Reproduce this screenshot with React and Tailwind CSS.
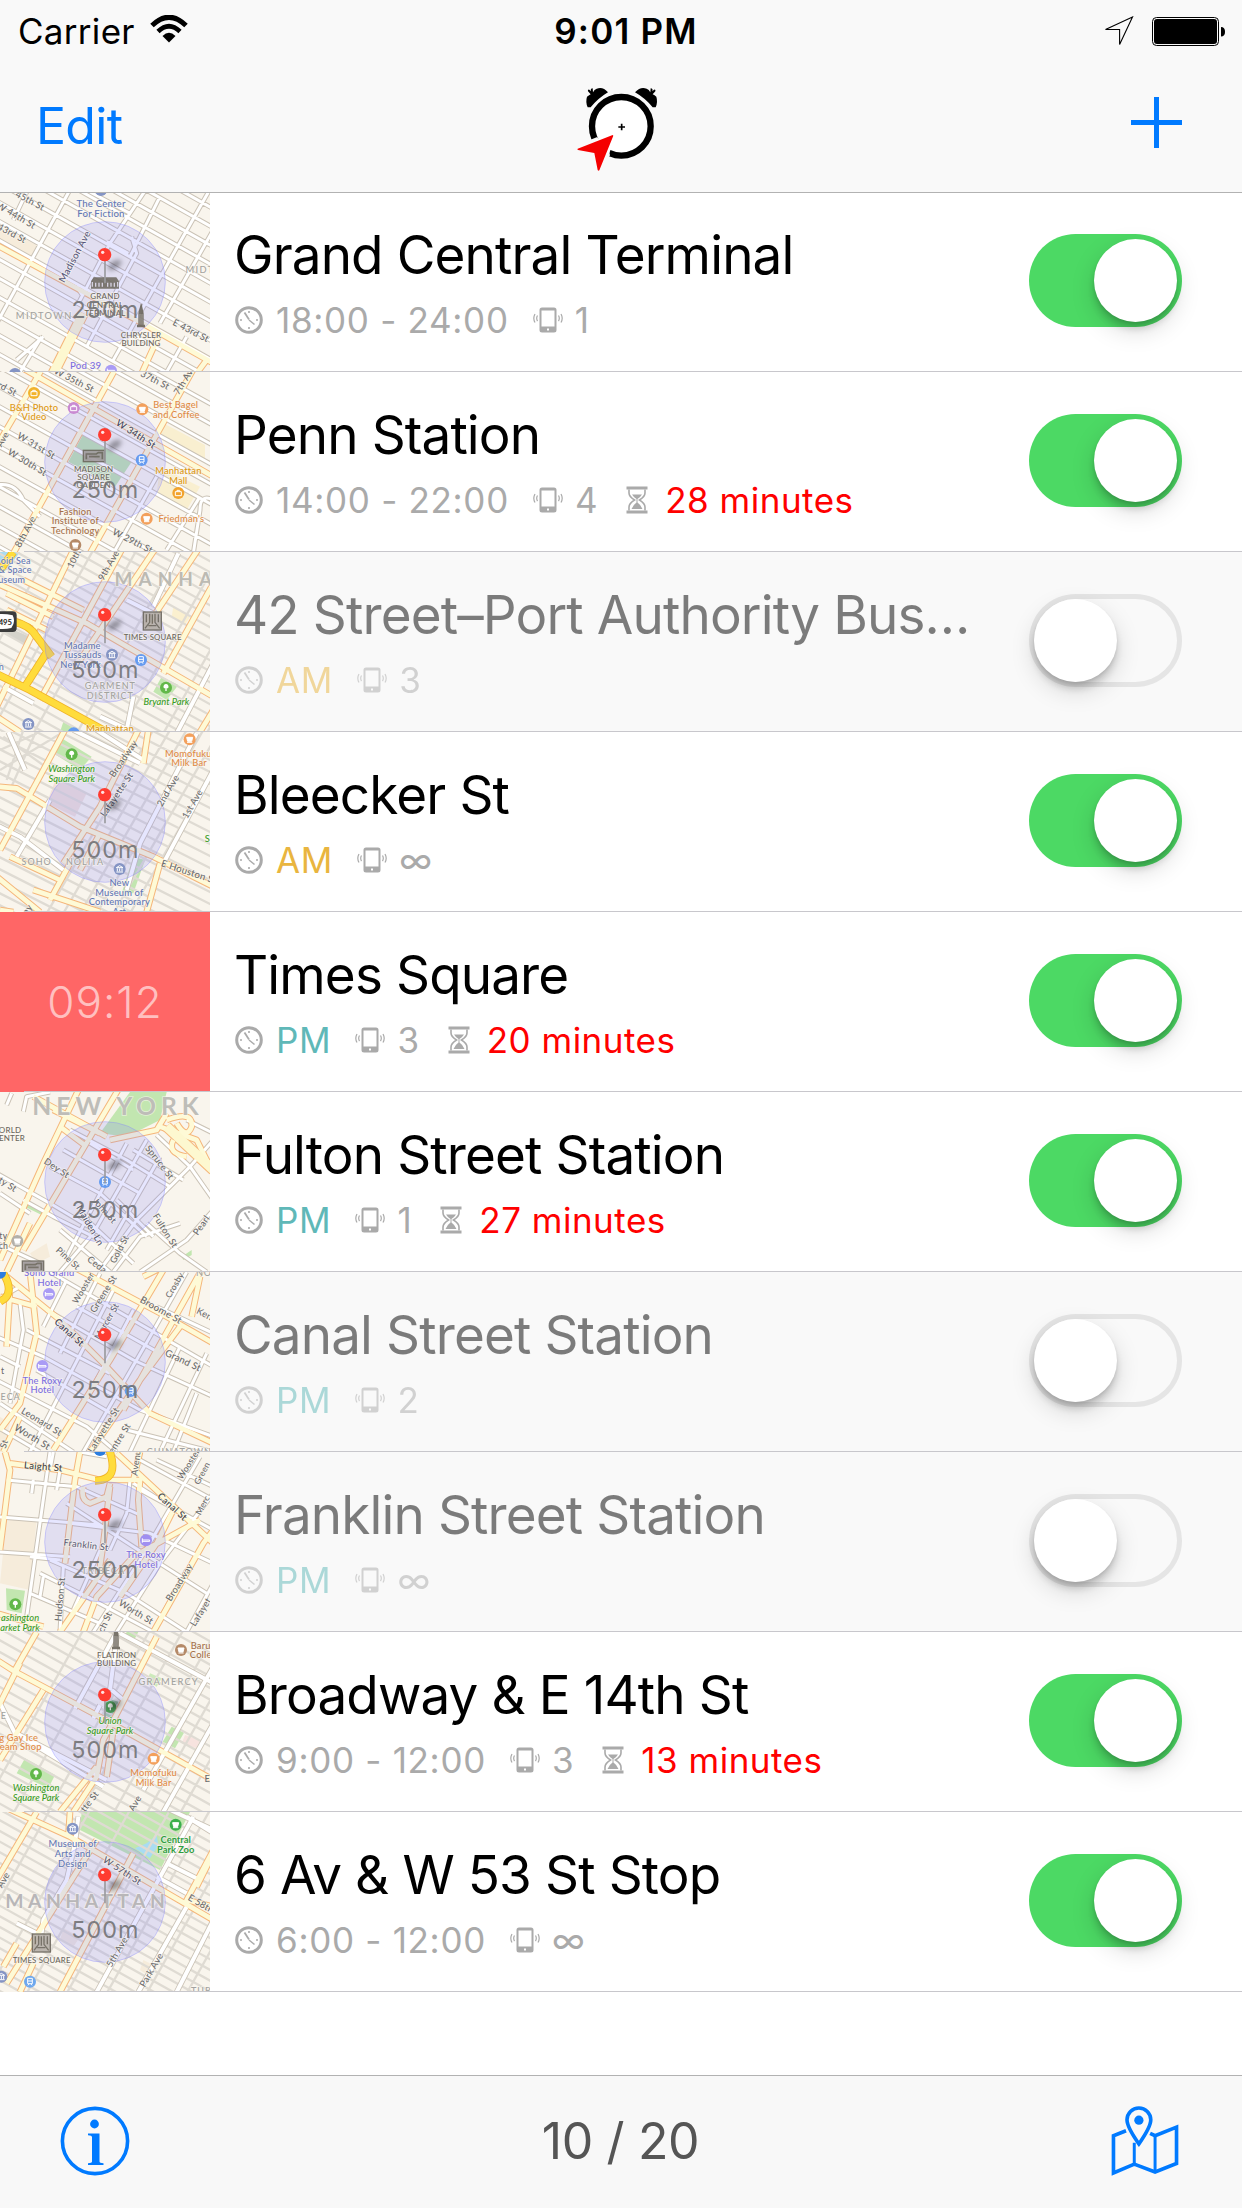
import { useState } from "react";

// n parallel segments, each moved by (dx, dy) from the one before
function fan(x1, y1, x2, y2, dx, dy, n) {
  let d = "";
  for (let i = 0; i < n; i++) {
    d += `M${x1 + dx * i} ${y1 + dy * i}L${x2 + dx * i} ${y2 + dy * i}`;
  }
  return d;
}

const BLUE = "#6277b5";
const VIOLET = "#7d6fe0";
const ORANGE = "#e08a45";
const GOLD = "#dd9812";
const GREEN = "#3a9d26";
const BROWN = "#a5714a";
const STREET = "#6b6b6b";
const AREA = "#a3a3a0";
const DARK = "#6b665c";

// labels: [x, y, text, color, size, angle, spacing, style]
// pois: [x, y, color, kind]
const maps = {
  grand: {
    blocks: [["M0 110L110 165L95 200L0 165Z", "#f6ecdb"]],
    white:
      fan(-20, -315, 650, 62, 0, 57, 16) +
      "M-10 400L215 -10M60 546L125 440M235 340L300 215L330 160L450 -20M390 200L480 20M385 190L320 155M395 140L410 190L260 470M340 510L640 -20M480 400L640 120M250 320L230 290M50 510L130 440M500 546L560 440M80 6L40 90M270 6L390 70",
    yellow: "M-10 165L240 300L410 390L640 520M425 550L480 430M590 550L620 510",
    wide: "M160 550L250 370",
    labels: [
      [90, 32, "45th St", STREET, 28, 28],
      [48, 76, "W 44th St", STREET, 28, 30],
      [36, 130, "43rd St", STREET, 28, 28],
      [224, 200, "Madison Ave", "#56567a", 29, -62],
      [303, 50, "The Center", BLUE, 29],
      [303, 80, "For Fiction", BLUE, 29],
      [133, 388, "MIDTOWN", AREA, 28, 0, 4],
      [600, 248, "MIDT", AREA, 28, 0, 4],
      [315, 328, "GRAND", DARK, 24],
      [315, 353, "CENTRAL", DARK, 24],
      [315, 378, "TERMINAL", DARK, 24],
      [423, 443, "CHRYSLER", DARK, 24],
      [423, 468, "BUILDING", DARK, 24],
      [573, 422, "E 43rd St", STREET, 28, 27],
      [257, 538, "Pod 39", VIOLET, 29],
    ],
    pois: [
      [303, 0, "#8494c4"],
      [333, 542, "#a99bf5", "bed"],
      [45, 552, "#8494c4"],
      [315, 280, DARK, "hall"],
      [423, 380, DARK, "tower"],
    ],
  },
  penn: {
    blocks: [
      ["M250 192L400 268L345 350L205 275Z", "#bfe3ae"],
      ["M490 160L615 225L615 270L470 200Z", "#f9efd0"],
      ["M480 290L600 350L560 420L470 370Z", "#f9efd0"],
    ],
    white:
      fan(-20, -260, 650, 112, 0, 60, 14) +
      "M-10 345Q45 335 70 390L120 440M500 540L600 380M580 550L600 420Q600 370 640 390M340 550L470 320",
    yellow:
      "M-10 -50L640 320M-5 220L130 -10M40 550L350 -10M270 550L590 -20",
    labels: [
      [222, 30, "W 35th St", STREET, 28, 27],
      [465, 30, "37th St", STREET, 28, 27],
      [550, 36, "7th Av", STREET, 28, -58],
      [22, 56, "rd St", STREET, 28, 27],
      [102, 122, "B&H Photo", GOLD, 28],
      [102, 151, "Video", GOLD, 28],
      [527, 115, "Best Bagel", ORANGE, 28],
      [529, 144, "and Coffee", ORANGE, 28],
      [408, 192, "W 34th St", "#44445c", 29, 33],
      [109, 227, "W 31st St", STREET, 28, 31],
      [82, 277, "W 30th St", STREET, 28, 31],
      [8, 208, "Ave", STREET, 27, -60],
      [281, 306, "MADISON", DARK, 24],
      [281, 331, "SQUARE", DARK, 24],
      [281, 355, "GARDEN", DARK, 24],
      [535, 313, "Manhattan", GOLD, 28],
      [535, 342, "Mall", GOLD, 28],
      [226, 434, "Fashion", BROWN, 28],
      [226, 463, "Institute of", BROWN, 28],
      [226, 493, "Technology", BROWN, 28],
      [544, 457, "Friedman's", ORANGE, 28],
      [76, 485, "8th Ave", STREET, 29, -62],
      [398, 513, "W 29th St", STREET, 28, 27],
    ],
    pois: [
      [102, 69, "#f2b32c", "bag"],
      [221, 114, "#c98ad2", "bag"],
      [427, 118, "#f3a05c", "cup"],
      [425, 270, "#659bf0", "train"],
      [535, 369, "#f2a32c", "bag"],
      [440, 446, "#f3a05c", "cup"],
      [226, 525, "#b58a68", "cup"],
      [283, 258, DARK, "arena"],
    ],
  },
  port: {
    blocks: [
      ["M485 380L535 405L500 450L460 425Z", "#c2e6b0"],
      ["M190 515L240 546L180 546Z", "#c2e6b0"],
      ["M0 6L60 6L20 60L0 70Z", "#a9dcf2"],
      ["M520 170L570 200L555 225L515 200Z", "#fbf0cf"],
      ["M20 230L100 265L90 290L10 250Z", "#d5d3cb"],
    ],
    grey: fan(-20, -330, 650, 45, 0, 33, 28) + fan(-160, 550, 150, 0, 130, 0, 8),
    white:
      "M380 540L400 440M530 550L640 340M535 10L460 170M380 150L480 200M10 410L100 460M300 500L400 546",
    yellow:
      "M-10 470L220 0M120 450L370 -10M240 330L470 -10M440 230L600 -10M490 370L640 100M-10 100L260 220L640 440M20 130L160 200M20 180L140 240M-10 500L60 546M600 546L640 480M70 90L250 180",
    highway:
      "M40 215Q90 225 110 260L155 320M145 300L75 410M-10 372L90 420L320 546M0 60L40 6",
    labels: [
      [47, 41, "oid Sea", BLUE, 27],
      [45, 70, "& Space", BLUE, 27],
      [35, 99, "useum", BLUE, 27],
      [222, 26, "10th", STREET, 27, -62],
      [326, 46, "9th Ave", STREET, 28, -60],
      [499, 107, "MANHA", "#bcbab3", 57, 0, 18, "bold"],
      [16, 225, "495", "#222", 23, 0, 0, "bold"],
      [458, 270, "TIMES SQUARE", DARK, 23.5],
      [247, 296, "Madame", BLUE, 28],
      [247, 325, "Tussauds", BLUE, 28],
      [242, 354, "New York", BLUE, 28],
      [331, 418, "GARMENT", AREA, 27, 0, 3],
      [331, 446, "DISTRICT", AREA, 27, 0, 3],
      [499, 464, "Bryant Park", GREEN, 28, 0, 0, "italic"],
      [330, 546, "Manhattan", GOLD, 29],
      [4, 360, "n", BLUE, 27],
    ],
    pois: [
      [10, 216, "#3b3b3b", "shield"],
      [457, 213, DARK, "square"],
      [336, 314, "#8494c4", "museum"],
      [423, 330, "#659bf0", "train"],
      [498, 413, "#62b84a", "tree"],
      [85, 522, "#8494c4", "museum"],
      [221, 550, "#659bf0"],
    ],
  },
  bleecker: {
    blocks: [
      ["M185 25L275 80L240 120L160 70Z", "#c2e6b0"],
      ["M400 380L435 390L400 490L365 490Z", "#c2e6b0"],
      ["M170 140L260 190L225 260L140 220Z", "#f1e0d8"],
    ],
    grey:
      fan(-20, -240, 650, 100, 0, 36, 26) +
      fan(140, 550, 460, 0, 50, 0, 6) +
      "M0 60L110 10M0 120L190 6M10 20L150 120M70 0L20 150M110 0L30 180",
    white:
      "M220 0L420 100M290 0L430 90M25 6L75 120M50 380L150 210M-10 285L60 320L190 420M380 480L420 340L590 10M490 400L640 120",
    yellow:
      "M-10 170L50 175L240 290L460 380L640 470M0 360L130 120L200 -10M430 100L445 0M190 400L300 230L420 -10M240 420L300 310M440 546L480 400M-10 440L120 546M100 480L300 546M150 510L210 400M0 540L40 546M30 380L180 450",
    labels: [
      [215, 126, "Washington", GREEN, 28, 0, 0, "italic"],
      [215, 155, "Square Park", GREEN, 28, 0, 0, "italic"],
      [370, 86, "Broadway", STREET, 28, -56],
      [350, 194, "Lafayette St", "#5c5c70", 28, -56],
      [504, 182, "2nd Ave", STREET, 28, -60],
      [577, 222, "1st Ave", STREET, 28, -60],
      [565, 80, "Momofuku", ORANGE, 28],
      [567, 109, "Milk Bar", ORANGE, 28],
      [622, 336, "S", GREEN, 28],
      [110, 404, "SOHO", AREA, 27, 0, 3],
      [255, 404, "NOLITA", AREA, 27, 0, 3],
      [562, 424, "E Houston S", STREET, 29, 18],
      [358, 468, "New", BLUE, 28],
      [358, 497, "Museum of", BLUE, 28],
      [358, 526, "Contemporary", BLUE, 28],
      [358, 556, "Art", BLUE, 28],
      [82, 538, "ay", STREET, 28, -56],
    ],
    pois: [
      [215, 73, "#62b84a", "tree"],
      [569, 28, "#f3a05c", "cup"],
      [359, 417, "#8494c4", "museum"],
    ],
  },
  fulton: {
    blocks: [
      ["M390 6L500 6L480 90L380 140L300 130Z", "#c2e6b0"],
      ["M70 330L135 360L125 375L75 350Z", "#c2e6b0"],
      ["M545 500L575 480L575 495L550 510Z", "#c2e6b0"],
      ["M90 490L140 460L150 500L110 520Z", "#f6ecdb"],
    ],
    white:
      "M20 45L35 10M70 65L80 20L150 6M-10 250L150 340L300 430M70 330L160 380L300 450M0 310L90 370M150 230L300 310L440 440M190 180L420 310M210 120L380 210L510 290M270 160L400 240M380 160L200 500M440 150L280 430L180 546M480 200L320 480M300 540L410 390L570 230L640 150M470 135L570 230L640 330M340 546L420 440L540 400M420 546L560 450L640 360M250 380L400 520M180 420L330 546M-10 460L120 520M350 330L460 440M560 90L640 130M400 180L550 270M440 400L540 490L620 546",
    yellow:
      "M0 510L130 220L240 -10M70 480L200 260L360 -10M100 20L320 140M160 60L300 130M180 110L260 170M330 150L470 120L500 70M480 110L590 150L640 250M20 546L90 400M520 150Q500 190 560 200M500 90Q580 60 575 110Q560 150 530 100",
    wide: "M500 110L640 240",
    labels: [
      [354, 76, "NEW YORK", "#bebdb8", 74, 0, 15, "bold"],
      [30, 128, "ORLD", DARK, 24],
      [36, 153, "ENTER", DARK, 24],
      [170, 234, "Dey St", STREET, 28, 33],
      [479, 217, "Spruce St", STREET, 28, 52],
      [23, 283, "ty St", STREET, 28, 32],
      [314, 362, "John St", "#65657b", 27, 48],
      [270, 406, "Maiden Ln", "#56566e", 28, 60],
      [496, 422, "Fulton St", STREET, 28, 58],
      [604, 406, "Pearl", STREET, 28, -55],
      [204, 505, "Pine St", STREET, 27, 42],
      [291, 524, "Ceda", STREET, 28, 38],
      [358, 478, "Gold St", STREET, 27, -62],
      [10, 448, "ty", STREET, 26],
      [10, 476, "ch", STREET, 26],
    ],
    pois: [
      [315, 276, "#659bf0", "train"],
      [52, 453, "#b3b0a9", "cup"],
      [100, 530, DARK, "arena"],
    ],
  },
  canal: {
    blocks: [["M0 440L30 460L10 546L0 546Z", "#f6ecdb"]],
    white:
      "M150 6L640 290M-10 200L130 260L420 420L640 500M80 180L330 310M140 120L400 270L640 380M230 110L480 250M110 300L350 440M-10 330L260 470L350 546M0 400L220 546M-10 470L120 546M300 10L180 250M340 60L90 546M400 120L290 330M60 100L70 180L30 400M560 6L450 200L250 546M620 250L480 546M540 230L390 546M200 30L130 170M640 190L470 110M380 480L640 546M590 370L520 546M-10 90L60 50M0 260L60 290",
    yellow:
      "M20 20L180 150L310 280L450 430L640 520M200 -20L500 140L640 220M0 480L60 400L110 190L90 6M160 540L330 270L490 0M370 420L610 -10M10 546L60 440M270 546L420 330L540 170M0 80L110 110M30 60L20 230M430 20L470 0M600 20L575 140",
    highway: "M10 10Q40 60 15 85L0 95",
    labels: [
      [148, 18, "Soho Grand", VIOLET, 28],
      [148, 47, "Hotel", VIOLET, 28],
      [250, 54, "Wooster", STREET, 26, -60],
      [310, 72, "Greene St", STREET, 28, -58],
      [524, 46, "Crosby", STREET, 26, -60],
      [320, 154, "Mercer St", "#666680", 27, -60],
      [483, 120, "Broome St", STREET, 29, 29],
      [614, 132, "Ken", STREET, 28, 27],
      [208, 187, "Canal St", "#3c3c55", 29, 42],
      [549, 271, "Grand St", STREET, 29, 25],
      [127, 341, "The Roxy", VIOLET, 28],
      [127, 370, "Hotel", VIOLET, 28],
      [32, 389, "ECA", AREA, 27, 0, 3],
      [125, 455, "Leonard St", STREET, 28, 31],
      [97, 501, "Worth St", STREET, 29, 31],
      [310, 480, "Lafayette St", STREET, 28, -58],
      [358, 505, "entre St", STREET, 28, -58],
      [538, 556, "CHINATOWN", AREA, 27, 0, 3],
      [8, 312, "t", STREET, 26],
      [12, 522, "St", STREET, 27, -70],
      [612, 18, "NO", AREA, 27, 0, 3],
    ],
    pois: [
      [0, 8, "#2b7de0"],
      [147, 72, "#a99bf5", "bed"],
      [127, 288, "#a99bf5", "bed"],
      [392, 363, "#659bf0", "train"],
    ],
  },
  franklin: {
    blocks: [
      ["M20 200L110 210L90 420L0 400Z", "#f6ecdb"],
      ["M18 415L75 422L65 490L20 480Z", "#c2e6b0"],
    ],
    white:
      "M150 6L100 360L80 500M-10 200L300 225M-10 305L210 320M20 90L230 110L420 195M200 160L400 290L620 430M100 90L95 130M180 60L170 120M210 220L450 250L640 340M150 330L380 430L560 546M120 370L260 440L460 546M90 430L300 520M90 320L180 330M130 380L120 440M390 90L380 190L330 300M600 20L420 330L280 546M640 130L480 340L350 546M470 30L640 110M420 120L640 240M560 360L460 546M640 400L560 546M300 300L220 480M190 350L180 546M420 30L640 150M240 6L320 20M160 6L150 60M400 100L560 200",
    yellow:
      "M15 6L30 60L0 300M30 40L180 60L300 90M240 6L225 90L195 340M250 110Q240 150 270 160L320 140L330 100M350 10L640 280M320 90L420 90L415 150L425 290M330 110L310 280L300 350M180 546L330 330M250 546L290 440L400 320L600 210M360 440L470 280L520 180M460 546L610 280L640 240M-10 490L130 530M400 90L420 6",
    highway: "M325 -10Q350 60 325 80Q310 92 285 92",
    labels: [
      [130, 50, "Laight St", "#444", 29, 5],
      [408, 38, "Avenu", STREET, 27, -82],
      [566, 42, "Wooster", STREET, 26, -58],
      [606, 70, "Green", STREET, 26, -62],
      [608, 166, "Merc", STREET, 26, -62],
      [517, 170, "Canal St", "#444", 29, 42],
      [258, 285, "Franklin St", "#65657b", 28, 7],
      [438, 324, "The Roxy", VIOLET, 28],
      [438, 353, "Hotel", VIOLET, 28],
      [310, 371, "TRIBECA", AREA, 27, 0, 3],
      [538, 397, "Broadway", STREET, 28, -58],
      [180, 448, "Hudson St", STREET, 28, -85],
      [408, 486, "Worth St", STREET, 28, 31],
      [315, 516, "ch St", STREET, 28, -65],
      [602, 486, "Lafayet", STREET, 28, -58],
      [60, 514, "ashington", GREEN, 28, 0, 0, "italic"],
      [60, 543, "arket Park", GREEN, 28, 0, 0, "italic"],
    ],
    pois: [
      [300, 0, "#2b7de0"],
      [438, 271, "#a08ff0", "bed"],
      [46, 463, "#62b84a", "tree"],
    ],
  },
  broadway: {
    blocks: [
      ["M75 385L165 435L145 475L50 430Z", "#c2e6b0"],
      ["M515 290L552 308L525 355L488 335Z", "#c2e6b0"],
      ["M555 315L600 330L590 355L545 340Z", "#f7e3df"],
      ["M320 205L355 215L335 265L310 255Z", "#a5d1a4"],
      ["M380 6L415 6L405 25L375 15Z", "#c2e6b0"],
      ["M450 130L485 145L470 170L440 155Z", "#cdeabb"],
    ],
    grey: fan(-20, -330, 650, 45, 0, 35, 27) + fan(-60, 550, 250, 0, 100, 0, 7),
    white:
      "M350 6L225 235M350 20L330 180M300 225L280 265M-10 200L45 310L310 470M40 305L320 450M335 180L370 210M360 10L640 160M430 480L640 110M490 546L640 280",
    yellow:
      "M45 120L110 6M-10 90L45 125L280 250L640 450M0 390L130 180M-10 240L60 100M470 20L310 330L290 440L220 546M340 300L320 440M180 546L290 410",
    labels: [
      [350, 83, "FLATIRON", DARK, 24],
      [350, 107, "BUILDING", DARK, 24],
      [602, 56, "Baru", BROWN, 28],
      [602, 84, "Colle", BROWN, 28],
      [506, 164, "GRAMERCY", AREA, 28, 0, 3.5],
      [10, 266, "E", AREA, 27],
      [330, 281, "Union", GREEN, 28, 0, 0, "italic"],
      [330, 311, "Square Park", GREEN, 28, 0, 0, "italic"],
      [56, 332, "g Gay Ice", ORANGE, 28],
      [62, 361, "eam Shop", ORANGE, 28],
      [461, 438, "Momofuku", ORANGE, 28],
      [461, 467, "Milk Bar", ORANGE, 28],
      [108, 483, "Washington", GREEN, 28, 0, 0, "italic"],
      [108, 512, "Square Park", GREEN, 28, 0, 0, "italic"],
      [264, 520, "ette St", STREET, 28, -52],
      [405, 520, "Ave", STREET, 28, -60],
      [622, 455, "E", STREET, 28],
    ],
    pois: [
      [348, 26, DARK, "tower"],
      [543, 60, "#b58a68", "cup"],
      [331, 231, "#4f9f5c", "tree"],
      [461, 386, "#f3a05c", "cup"],
      [108, 432, "#62b84a", "tree"],
    ],
  },
  sixth: {
    blocks: [
      ["M245 6L570 6L480 180L240 60Z", "#c2e6b0"],
      ["M470 75L475 105L450 145L405 115L440 100Z", "#a9dcf2"],
      ["M190 355L240 380L220 410L180 390Z", "#f1e6da"],
      ["M430 450L470 470L450 500L420 480Z", "#f6ecdb"],
    ],
    grey: fan(-20, -300, 650, 75, 0, 32, 28) + fan(-160, 550, 150, 0, 120, 0, 7),
    white:
      "M235 20L225 100L200 210L130 330L125 370M50 340L140 385M290 546L580 20M500 160L600 210M415 546L560 290M530 546L640 330M490 -10L640 60M470 200L560 250M560 20L640 70",
    yellow:
      "M-10 210L110 6M-10 -20L210 80L640 330M20 520L290 90M50 400L10 470M180 546L400 130M640 120L560 270L640 290M590 230L640 130M60 546L100 460M210 6L205 80",
    labels: [
      [218, 110, "Museum of", BLUE, 28],
      [218, 140, "Arts and", BLUE, 28],
      [218, 170, "Design", BLUE, 28],
      [527, 100, "Central", "#2f9d3f", 28, 0, 0, "bold"],
      [527, 129, "Park Zoo", "#2f9d3f", 28, 0, 0, "bold"],
      [367, 182, "W 57th St", "#5a5a70", 28, 33],
      [262, 294, "MANHATTAN", "#b8b6b8", 58, 0, 13.5, "bold"],
      [603, 281, "E 58th", STREET, 28, 30],
      [10, 210, "Ave", STREET, 28, -60],
      [125, 458, "TIMES SQUARE", DARK, 23.5],
      [351, 426, "5th Ave", STREET, 28, -60],
      [454, 480, "Park Ave", STREET, 28, -60],
      [604, 553, "TUR", AREA, 27, 0, 3],
    ],
    pois: [
      [218, 56, "#8494c4", "museum"],
      [527, 44, "#3cb04c", "cup"],
      [124, 399, DARK, "square"],
      [4, 500, "#8494c4", "museum"],
      [90, 515, "#6ea8ee", "train"],
    ],
  },
};

const alarms = [
  { id: 1, map: "grand", radius: "250m", name: "Grand Central Terminal", time: "18:00 - 24:00", repeat: "1", on: true },
  { id: 2, map: "penn", radius: "250m", name: "Penn Station", time: "14:00 - 22:00", repeat: "4", left: "28 minutes", on: true },
  { id: 3, map: "port", radius: "500m", name: "42 Street–Port Authority Bus…", time: "AM", repeat: "3", on: false },
  { id: 4, map: "bleecker", radius: "500m", name: "Bleecker St", time: "AM", repeat: "∞", on: true },
  { id: 5, countdown: "09:12", name: "Times Square", time: "PM", repeat: "3", left: "20 minutes", on: true },
  { id: 6, map: "fulton", radius: "250m", name: "Fulton Street Station", time: "PM", repeat: "1", left: "27 minutes", on: true },
  { id: 7, map: "canal", radius: "250m", name: "Canal Street Station", time: "PM", repeat: "2", on: false },
  { id: 8, map: "franklin", radius: "250m", name: "Franklin Street Station", time: "PM", repeat: "∞", on: false },
  { id: 9, map: "broadway", radius: "500m", name: "Broadway & E 14th St", time: "9:00 - 12:00", repeat: "3", left: "13 minutes", on: true },
  { id: 10, map: "sixth", radius: "500m", name: "6 Av & W 53 St Stop", time: "6:00 - 12:00", repeat: "∞", on: true },
];

function Poi({ x, y, color, kind }) {
  if (kind === "hall") {
    return (
      <g transform={`translate(${x} ${y})`} fill={color} opacity="0.85">
        <path d="M-42 -6L-34 -18H34L42 -6V16H-42Z" />
        <path d="M-38 -4V10M-28 -2V10M-18 -2V10M-8 -2V10M8 -2V10M18 -2V10M28 -2V10M38 -4V10" stroke="#d5d0de" strokeWidth="4" />
      </g>
    );
  }
  if (kind === "arena") {
    return (
      <g transform={`translate(${x} ${y})`} fill="none" stroke={color} opacity="0.9">
        <rect x="-33" y="-17" width="64" height="34" fill="#a09a9c" strokeWidth="4" />
        <path d="M-24 10V-6H6L12 -10H24V10M-16 2H16" strokeWidth="5" />
      </g>
    );
  }
  if (kind === "tower") {
    return (
      <g transform={`translate(${x} ${y})`} fill={color} opacity="0.9">
        <path d="M-1 -38H2L8 -10V24H12V32H-12V24H-8V-10Z" />
        <path d="M-3 -8V24M3 -8V24" stroke="#b8b2ad" strokeWidth="2" />
      </g>
    );
  }
  if (kind === "square") {
    return (
      <g transform={`translate(${x} ${y})`} fill="none" stroke={color} opacity="0.9">
        <rect x="-27" y="-27" width="54" height="54" strokeWidth="4" fill="#b5afa8" />
        <path d="M-22 22L-8 4V-22M22 22L8 4V-22M0 -20V8M-12 14H12M-18 -20V4M18 -20V4" strokeWidth="4" />
      </g>
    );
  }
  if (kind === "shield") {
    return (
      <g transform={`translate(${x} ${y})`}>
        <rect x="-44" y="-32" width="84" height="62" rx="12" fill={color} />
        <path d="M-36 -20Q-4 -28 28 -20Q38 0 24 18Q0 24 -30 18Z" fill="#fff" />
      </g>
    );
  }
  return (
    <g transform={`translate(${x} ${y})`}>
      <circle r="18" fill={color} />
      {kind === "tree" && <path d="M0 -11a8 8 0 0 1 7 11q-3 3 -5 1v9h-4v-9q-2 2 -5 -1a8 8 0 0 1 7 -11" fill="#fff" />}
      {kind === "bed" && <path d="M-11 -6V7M-11 3H11V-1H-11" stroke="#fff" strokeWidth="3" fill="none" />}
      {kind === "bag" && <path d="M-9 -4H9V8H-9ZM-4 -4V-8H4V-4" stroke="#fff" strokeWidth="3" fill="none" />}
      {kind === "cup" && <path d="M-9 -6H9L6 6H-6ZM-8 9H8" stroke="#fff" strokeWidth="3" fill="#fff" />}
      {kind === "train" && <path d="M-7 -10H7V6H-7ZM-7 -2H7M-6 11L-3 7M6 11L3 7" stroke="#fff" strokeWidth="3" fill="none" />}
      {kind === "museum" && <path d="M-10 -4L0 -10L10 -4ZM-7 -2V7M0 -2V7M7 -2V7M-10 9H10" stroke="#fff" strokeWidth="3" fill="none" />}
    </g>
  );
}

function MapThumb({ map, radius }) {
  const { blocks, grey, white, yellow, wide, highway, labels, pois } = maps[map];
  return (
    <svg viewBox="0 6 630 540" className="block h-[180px] w-[210px] bg-[#f9f5ed]">
      {blocks.map(([d, fill]) => (
        <path key={d} d={d} fill={fill} />
      ))}
      <g fill="none" strokeLinejoin="round">
        {grey && <path d={grey} stroke="#dfdbd3" strokeWidth="7" />}
        <path d={white} stroke="#cac2b5" strokeWidth={grey ? 17 : 15} />
        <path d={yellow} stroke="#f5b67a" strokeWidth="20" />
        {wide && <path d={wide} stroke="#f5b67a" strokeWidth="34" />}
        <path d={white} stroke="#ffffff" strokeWidth={grey ? 12 : 9} />
        <path d={yellow} stroke="#fefad6" strokeWidth="14" />
        {wide && <path d={wide} stroke="#fdf8d0" strokeWidth="28" />}
        {highway && <path d={highway} stroke="#f0b429" strokeWidth="24" />}
        {highway && <path d={highway} stroke="#ffdc3c" strokeWidth="19" />}
      </g>
      <circle cx="315" cy="276" r="181" fill="#8080ff" fillOpacity="0.2" stroke="#8080ff" strokeOpacity="0.35" strokeWidth="3" />
      {pois.map(([x, y, color, kind]) => (
        <Poi key={`${x}-${y}`} x={x} y={y} color={color} kind={kind} />
      ))}
      <g textAnchor="middle" className="font-[Lato,sans-serif]">
        {labels.map(([x, y, text, color, size, angle = 0, spacing = 0.5, style]) => (
          <text
            key={`${x}-${y}`}
            transform={`translate(${x} ${y}) rotate(${angle})`}
            // rotated labels are centred on the road, the others sit on a baseline
            dy={angle ? size * 0.34 : 0}
            fill={color}
            fontSize={size}
            letterSpacing={spacing}
            fontStyle={style === "italic" ? "italic" : "normal"}
            fontWeight={style === "bold" ? 700 : 500}
            stroke="#fbf8f2"
            strokeOpacity="0.6"
            strokeWidth="5"
            paintOrder="stroke"
          >
            {text}
          </text>
        ))}
      </g>
      <ellipse cx="344" cy="225" rx="23" ry="11" transform="rotate(-32 344 225)" className="blur-[8px]" fill="#000" fillOpacity="0.38" />
      <path d="M315 205V280" stroke="#9b9b9f" strokeWidth="5" />
      <circle cx="314" cy="194" r="20" fill="#ff3b30" />
      <circle cx="308" cy="187" r="5" fill="#fff" fillOpacity="0.85" />
      <text x="316" y="384" textAnchor="middle" className="font-[Inter,sans-serif]" fontSize="70" letterSpacing="3" fill="#77777a" fillOpacity="0.95">
        {radius}
      </text>
    </svg>
  );
}

function ClockIcon() {
  return (
    <svg viewBox="0 0 28 28" className="size-7 shrink-0" fill="none" stroke="currentColor">
      <circle cx="14" cy="14" r="12.3" strokeWidth="3" />
      <path d="M9.5 6.5L14 13.5" strokeWidth="1.8" />
      <path d="M14 14L19.5 18.5" strokeWidth="1.5" />
      <path d="M14 5v2M14 21v2M5 14h2M21 14h2" strokeWidth="1.6" />
    </svg>
  );
}

function PhoneIcon() {
  return (
    <svg viewBox="0 0 30 28" className="h-7 w-[30px] shrink-0" fill="none" stroke="currentColor">
      <path
        d="M9 1.5h12a2.5 2.5 0 0 1 2.5 2.5v20a2.5 2.5 0 0 1-2.5 2.5H9A2.5 2.5 0 0 1 6.500 24V4A2.500 2.500 0 0 1 9 1.500zM8.500 4.500v16h13v-16zM14 22.500v2h2v-2z"
        fill="currentColor"
        fillRule="evenodd"
        stroke="none"
      />
      <path d="M4.500 9.500q-1.600 2.800 0 5.600M2 8q-2.400 4.200 0 8.500M25.500 9.500q1.600 2.800 0 5.600M28 8q2.400 4.200 0 8.500" strokeWidth="1.200" />
    </svg>
  );
}

function HourglassIcon() {
  return (
    <svg viewBox="0 0 22 28" className="h-7 w-[22px] shrink-0" fill="currentColor">
      <path d="M0.500 0.500h21v3h-21zM0.500 24.500h21v3h-21z" />
      <path d="M3 3.500v3.500q0 3.500 5.500 7q-5.500 3.500 -5.500 7v3.500M19 3.500v3.500q0 3.500 -5.500 7q5.500 3.500 5.500 7v3.500" fill="none" stroke="currentColor" strokeWidth="1.600" />
      <path d="M6 8.500h10q-1.200 2.200-4.500 4.500v3.500q3.500 2.500 5 6.500h-11q1.500-4 5-6.500v-3.500q-3.300-2.300-4.500-4.500z" />
    </svg>
  );
}

function AlarmLogo() {
  return (
    <svg viewBox="0 0 360 360" className="size-[120px]">
      <circle cx="184" cy="169" r="88" fill="#fff" stroke="#000" strokeWidth="19" />
      <path d="M83 112Q76 96 81 80Q88 76 92 73L84 64Q82 58 88 59L93 64Q90 56 98 55L99 67Q103 58 110 56Q128 48 144 67Q115 84 92 112Z" />
      <path d="M287 112Q294 96 289 80Q284 76 278 73L286 64Q288 58 282 59L277 64Q280 56 272 55L271 67Q267 58 260 56Q242 48 225 67Q255 84 278 112Z" />
      <path d="M185 161V181M175 171H195" stroke="#000" strokeWidth="5" />
      {/* gap cut out of the ring around the arrow */}
      <path d="M80 214L112 201L118 212L108 262L140 270L150 256L146 240Z" fill="#f9f9f9" />
      <path d="M108 208L170 186L148 250L118 262Z" fill="#fff" />
      <path d="M53 236L158 195L160 197L118 301Q115 304 113 300L103 249L54 240Q51 238 53 236Z" fill="#f50000" />
    </svg>
  );
}

function MapIcon() {
  return (
    <svg viewBox="63 47 205 212" className="h-[70px] w-[68px]" fill="none" stroke="#007aff">
      <path d="M108 122L70 137V250L133 223L196 247L261 221V111L196 137L181 130" strokeWidth="11" />
      <path d="M133 158V223M196 137V247" strokeWidth="9" />
      <path d="M147 162Q111 111 111 89A36 36 0 0 1 183 89Q183 111 147 162Z" strokeWidth="11" />
      <circle cx="147" cy="90" r="14" fill="#007aff" stroke="none" />
    </svg>
  );
}

function InfoIcon() {
  return (
    <svg viewBox="0 0 70 70" className="size-[70px]" fill="#007aff">
      <circle cx="35" cy="35" r="32.6" fill="none" stroke="#007aff" strokeWidth="3.6" />
      <circle cx="34.5" cy="18" r="4.4" />
      <path d="M28 27.5h11.500v28q0 1.500 4 1.800v1.700H28v-1.700q4-.3 4-1.800v-24.500q0-1.500-4-1.800z" />
    </svg>
  );
}

function Switch({ on, onChange }) {
  return (
    <button
      type="button"
      role="switch"
      aria-checked={on}
      onClick={onChange}
      className={`flex h-[93px] w-[153px] shrink-0 rounded-full p-[5px] ${
        on ? "justify-end bg-[#4cd964]" : "justify-start shadow-[inset_0_0_0_5px_#e5e5e5]"
      }`}
    >
      <span className="size-[83px] rounded-full bg-white shadow-[0_9px_24px_rgba(0,0,0,0.15),0_7px_7px_rgba(0,0,0,0.14),0_2px_3px_rgba(0,0,0,0.08)]" />
    </button>
  );
}

function AlarmRow({ alarm, onToggle }) {
  const { map, radius, countdown, name, time, repeat, left, on } = alarm;
  const timeColor = time === "AM" ? "text-[#e9b53f]" : time === "PM" ? "text-[#5fb8b8]" : "";

  return (
    <li className={`relative flex h-[180px] ${on ? "bg-white" : "bg-[#f9f9f9]"}`}>
      {countdown ? (
        <div className="flex w-[210px] shrink-0 items-center justify-center bg-[#ff6666] text-[44px] font-light tracking-[1px] text-white/60">
          {countdown}
        </div>
      ) : (
        <div className="w-[210px] shrink-0 overflow-hidden">
          <MapThumb map={map} radius={radius} />
        </div>
      )}
      <div className={`min-w-0 flex-1 pt-[33px] pl-[25px] whitespace-nowrap ${on ? "" : "opacity-50"}`}>
        <h2 className="-ml-px text-[53px] leading-[60px] tracking-[-0.87px]">{name}</h2>
        <div className="mt-[15px] flex h-10 items-center text-[35px] leading-10 tracking-[0.7px] text-[#aaa]">
          <ClockIcon />
          <span className={`ml-[13px] ${timeColor}`}>{time}</span>
          <span className="mr-[12px] ml-[24px] flex">
            <PhoneIcon />
          </span>
          <span>{repeat}</span>
          {left && (
            <>
              <span className="mr-[17px] ml-[28px] flex">
                <HourglassIcon />
              </span>
              <span className="tracking-[0.5px] text-[#ff0000]">{left}</span>
            </>
          )}
        </div>
      </div>
      <div className="flex items-center pr-[60px] pb-[3px]">
        <Switch on={on} onChange={onToggle} />
      </div>
      <div className="absolute right-0 bottom-0 left-6 h-px bg-[#c8c7cc]" />
    </li>
  );
}

function StatusBar() {
  return (
    <div className="grid h-[62px] grid-cols-3 items-center pr-[17px] pl-[18px] text-[35px] leading-none">
      <div className="flex items-center gap-[15px]">
        <span className="tracking-[0.3px]">Carrier</span>
        <svg viewBox="0 0 38 28" className="mb-1 h-7 w-[38px]" fill="none" stroke="#000">
          <path d="M2 10.5Q19 -6 36 10.5" strokeWidth="5" />
          <path d="M8 16.5Q19 6 30 16.5" strokeWidth="4.6" />
          <path d="M12.5 21Q19 14.5 25.5 21L19 27.5Z" fill="#000" stroke="none" />
        </svg>
      </div>
      <div className="pl-[9px] text-center font-semibold tracking-[1.2px]">9:01 PM</div>
      <div className="flex items-center justify-end gap-[18px]">
        <svg viewBox="0 0 30 30" className="size-[30px]" fill="none" stroke="#000" strokeWidth="1.1">
          <path d="M1.5 13.5L28.5 1L15.6 28.5V13.5Z" />
        </svg>
        <svg viewBox="0 0 73 29" className="h-[29px] w-[73px]">
          <rect x="0.5" y="0.5" width="66" height="28" rx="4" fill="none" stroke="#000" />
          <rect x="2" y="2" width="63" height="25" rx="3" />
          <path d="M69 10q4 0 4 4.7t-4 4.7z" />
        </svg>
      </div>
    </div>
  );
}

export default function App() {
  const [list, setList] = useState(alarms);

  const toggle = (id) => {
    setList(list.map((a) => (a.id === id ? { ...a, on: !a.on } : a)));
  };

  return (
    <div className="flex h-[2208px] w-[1242px] flex-col overflow-hidden bg-white font-[Inter,'Liberation_Sans',sans-serif] text-black">
      <header className="relative z-10 -mb-px h-[193px] shrink-0 border-b border-[#b2b2b2] bg-[#f9f9f9]">
        <StatusBar />
        <nav className="grid h-[130px] grid-cols-3 items-center">
          <button type="button" className="pb-0.5 pl-[36px] text-left text-[50px] tracking-[-0.7px] text-[#007aff]">
            Edit
          </button>
          <div className="flex justify-center pt-1.5 pr-[2px]">
            <AlarmLogo />
          </div>
          <button type="button" aria-label="Add" className="flex justify-end pr-[60px] pb-[9px]">
            <svg viewBox="0 0 51 51" className="size-[51px]" stroke="#007aff" strokeWidth="5">
              <path d="M25.5 0V51M0 25.5H51" />
            </svg>
          </button>
        </nav>
      </header>

      <ul className="flex-1">
        {list.map((alarm) => (
          <AlarmRow key={alarm.id} alarm={alarm} onToggle={() => toggle(alarm.id)} />
        ))}
      </ul>

      <footer className="flex h-[133px] shrink-0 items-center justify-between border-t border-[#b2b2b2] bg-[#f8f8f8] pr-[63px] pb-[2px] pl-[60px]">
        <InfoIcon />
        <span className="text-[50px] tracking-[-0.4px] text-[#555]">10 / 20</span>
        <MapIcon />
      </footer>
    </div>
  );
}
